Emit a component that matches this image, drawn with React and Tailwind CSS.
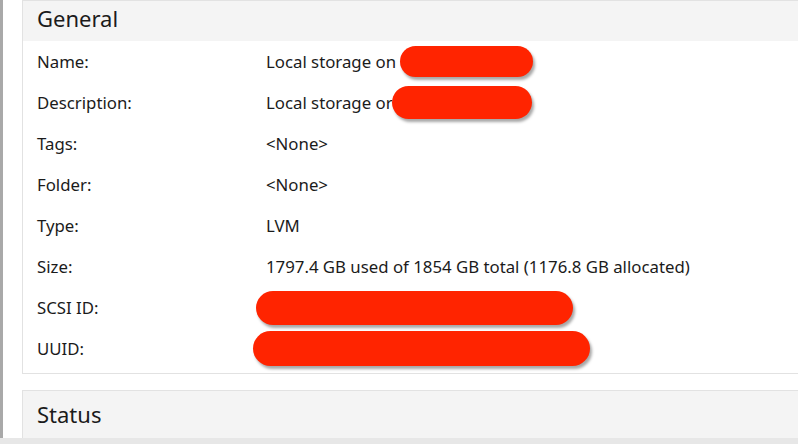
import React from "react";

const rows = [
  { label: "Name:", value: "Local storage on", redact: "name" },
  { label: "Description:", value: "Local storage or", redact: "desc" },
  { label: "Tags:", value: "<None>" },
  { label: "Folder:", value: "<None>" },
  { label: "Type:", value: "LVM" },
  { label: "Size:", value: "1797.4 GB used of 1854 GB total (1176.8 GB allocated)" },
  { label: "SCSI ID:", redact: "scsi" },
  { label: "UUID:", redact: "uuid" },
];

// red blobs hiding host names / ids
const Redact = ({ kind }) => {
  if (kind === "name")
    return <span className="inline-block align-middle ml-[4px] w-[133px] h-[31px] rounded-full bg-[#ff2400] shadow-[2px_3px_3px_rgba(0,0,0,0.35)]" />;
  if (kind === "desc")
    return <span className="inline-block align-middle -ml-[1px] w-[140px] h-[33px] rounded-full bg-[#ff2400] shadow-[2px_3px_3px_rgba(0,0,0,0.35)]" />;
  if (kind === "scsi")
    return <span className="inline-block align-middle -ml-[10px] w-[317px] h-[34px] rounded-full bg-[#ff2400] shadow-[2px_3px_3px_rgba(0,0,0,0.35)]" />;
  return <span className="inline-block align-middle -ml-[13px] w-[337px] h-[35px] rounded-full bg-[#ff2400] shadow-[2px_3px_3px_rgba(0,0,0,0.35)]" />;
};

export default function App() {
  return (
    <div
      className="w-[798px] h-[444px] overflow-hidden bg-white flex flex-col text-[#1b1b1b]"
      style={{ fontFamily: "'Noto Sans', 'Open Sans', Arial, sans-serif" }}
    >
      <div className="flex-1 flex border-l-[3px] border-[#a9a9a9] pl-[19px]">
        <div className="flex-1 flex flex-col">
          {/* General panel */}
          <div className="border-l border-t border-b border-[#e2e2e2] h-[374px]">
            <div className="h-[40px] bg-[#f4f4f4] flex items-center pl-[14px] pb-[6px] text-[22px]">General</div>
            <div className="flex flex-col">
              {rows.map((r) => (
                <div key={r.label} className="h-[41px] flex items-center text-[16.8px]">
                  <div className="w-[243px] pl-[14px]">{r.label}</div>
                  <div className="flex items-center whitespace-nowrap">
                    {r.value && <span>{r.value}</span>}
                    {r.redact && <Redact kind={r.redact} />}
                  </div>
                </div>
              ))}
            </div>
          </div>

          <div className="h-[16px]" />

          {/* Status panel */}
          <div className="border-l border-t border-[#e2e2e2] flex-1 bg-[#f4f4f4] flex items-center pl-[14px] text-[22px]">
            Status
          </div>
        </div>
      </div>
      <div className="h-[6px] bg-[#e7e7e7]" />
    </div>
  );
}
